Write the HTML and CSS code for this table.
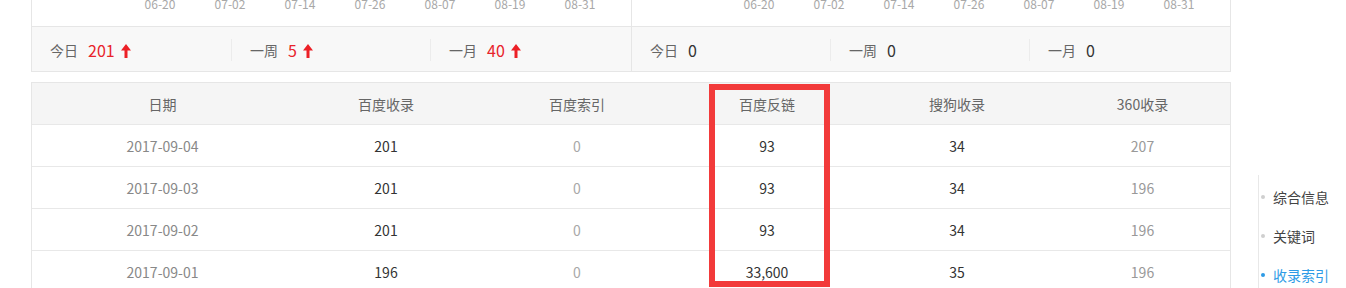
FILE: index.html
```html
<!DOCTYPE html>
<html lang="zh-CN">
<head>
<meta charset="utf-8">
<title>收录索引</title>
<link rel="stylesheet" href="styles.css">
</head>
<body>
<div class="page">
  <div class="main">
    <div class="charts">
      <div class="panel panel-left">
        <div class="axis">
          <span>06-20</span><span>07-02</span><span>07-14</span><span>07-26</span><span>08-07</span><span>08-19</span><span>08-31</span>
        </div>
        <div class="stats">
          <div class="stat"><span class="lbl">今日</span><span class="num up">201</span><svg class="arrow" width="10" height="14" viewBox="0 0 10 14"><path d="M5 0 L10 6.5 L6.5 6.5 L6.5 14 L3.5 14 L3.5 6.5 L0 6.5 Z" fill="#ec2027"/></svg></div>
          <div class="stat sep"><span class="lbl">一周</span><span class="num up">5</span><svg class="arrow" width="10" height="14" viewBox="0 0 10 14"><path d="M5 0 L10 6.5 L6.5 6.5 L6.5 14 L3.5 14 L3.5 6.5 L0 6.5 Z" fill="#ec2027"/></svg></div>
          <div class="stat sep last"><span class="lbl">一月</span><span class="num up">40</span><svg class="arrow" width="10" height="14" viewBox="0 0 10 14"><path d="M5 0 L10 6.5 L6.5 6.5 L6.5 14 L3.5 14 L3.5 6.5 L0 6.5 Z" fill="#ec2027"/></svg></div>
        </div>
      </div>
      <div class="panel panel-right">
        <div class="axis">
          <span>06-20</span><span>07-02</span><span>07-14</span><span>07-26</span><span>08-07</span><span>08-19</span><span>08-31</span>
        </div>
        <div class="stats">
          <div class="stat"><span class="lbl">今日</span><span class="num">0</span></div>
          <div class="stat sep"><span class="lbl">一周</span><span class="num">0</span></div>
          <div class="stat sep last"><span class="lbl">一月</span><span class="num">0</span></div>
        </div>
      </div>
    </div>

    <div class="table">
      <div class="row head">
        <div>日期</div><div>百度收录</div><div>百度索引</div><div>百度反链</div><div>搜狗收录</div><div>360收录</div>
      </div>
      <div class="row">
        <div class="c-date">2017-09-04</div><div class="c-dark">201</div><div class="c-light">0</div><div class="c-dark">93</div><div class="c-dark">34</div><div class="c-mid">207</div>
      </div>
      <div class="row">
        <div class="c-date">2017-09-03</div><div class="c-dark">201</div><div class="c-light">0</div><div class="c-dark">93</div><div class="c-dark">34</div><div class="c-mid">196</div>
      </div>
      <div class="row">
        <div class="c-date">2017-09-02</div><div class="c-dark">201</div><div class="c-light">0</div><div class="c-dark">93</div><div class="c-dark">34</div><div class="c-mid">196</div>
      </div>
      <div class="row">
        <div class="c-date">2017-09-01</div><div class="c-dark">196</div><div class="c-light">0</div><div class="c-dark">33,600</div><div class="c-dark">35</div><div class="c-mid">196</div>
      </div>
      <div class="highlight"></div>
    </div>
  </div>

  <nav class="side">
    <a class="item">综合信息</a>
    <a class="item">关键词</a>
    <a class="item active">收录索引</a>
  </nav>
</div>
</body>
</html>
```

FILE: styles.css
```css
* { box-sizing: border-box; }

html, body {
  margin: 0;
  padding: 0;
  background: #fff;
  overflow: hidden;
}

body {
  font-family: "Noto Sans CJK SC", "Microsoft YaHei", sans-serif;
  font-size: 14px;
  color: #333;
}

.page {
  display: flex;
  align-items: flex-start;
  padding-left: 31px;
}

.main {
  width: 1200px;
  flex: none;
}

/* ---------- charts ---------- */
.charts {
  display: flex;
  border-left: 1px solid #e6e6e6;
  border-right: 1px solid #e6e6e6;
  border-bottom: 1px solid #e6e6e6;
}

.panel-left {
  width: 600px;
  border-right: 1px solid #e6e6e6;
}

.panel-right {
  flex: 1;
}

.axis {
  height: 27px;
  border-bottom: 1px solid #e6e6e6;
  display: flex;
  padding-left: 93px;
  overflow: hidden;
}

.panel-right .axis {
  padding-left: 92px;
}

.axis span {
  width: 70px;
  text-align: center;
  font-size: 12px;
  color: #a8a8a8;
  line-height: 14px;
  margin-top: -3px;
}

.stats {
  height: 44px;
  background: #f8f8f8;
  display: flex;
  align-items: center;
}

.stat {
  width: 199px;
  height: 22px;
  display: flex;
  align-items: center;
  padding-left: 18px;
  margin-top: 2px;
}

.panel-right .stat:first-child {
  width: 198px;
}

.stat.sep {
  border-left: 1px solid #ececec;
}

.stat.last {
  width: 197px;
}

.lbl {
  color: #666;
  font-size: 14px;
  margin-right: 10px;
  line-height: 22px;
}

.num {
  font-size: 16px;
  color: #333;
  line-height: 22px;
}

.num.up {
  color: #e8232b;
}

.arrow {
  margin-left: 6px;
  margin-top: 1px;
}

/* ---------- table ---------- */
.table {
  position: relative;
  margin-top: 10px;
  border: 1px solid #e6e6e6;
  border-bottom: none;
}

.row {
  display: grid;
  grid-template-columns: 261px 186px 196px 184px 196px 1fr;
  height: 42px;
  border-bottom: 1px solid #e8e8e8;
}

.row > div {
  display: flex;
  align-items: center;
  justify-content: center;
  font-size: 14px;
}

.row.head {
  background: #f5f5f5;
}

.row.head > div {
  color: #666;
}

.c-date { color: #888; }
.c-dark { color: #333; }
.c-light { color: #a8a8a8; }
.c-mid { color: #999; }

.highlight {
  position: absolute;
  left: 677px;
  top: 1px;
  width: 121px;
  height: 203px;
  border: 6px solid #f23a3a;
  pointer-events: none;
}

/* ---------- side nav ---------- */
.side {
  margin-left: 27px;
  margin-top: 175px;
  border-left: 1px solid #e8e8e8;
  padding-top: 3px;
  height: 140px;
  display: flex;
  flex-direction: column;
}

.item {
  position: relative;
  height: 39px;
  line-height: 39px;
  padding-left: 14px;
  font-size: 14px;
  color: #444;
  white-space: nowrap;
}

.item::before {
  content: "";
  position: absolute;
  left: 2px;
  top: 17px;
  width: 4px;
  height: 4px;
  border-radius: 50%;
  background: #cfcfcf;
}

.item.active {
  color: #2e9be6;
}

.item.active::before {
  background: #2e9be6;
}
```
